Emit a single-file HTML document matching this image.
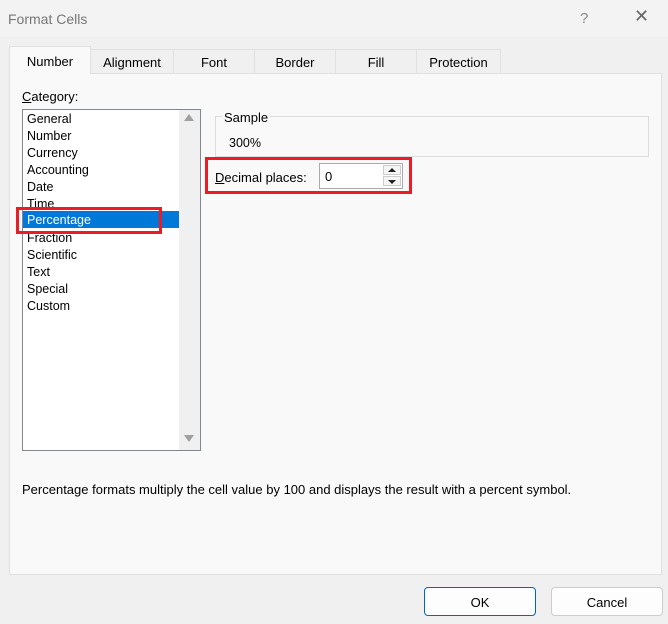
<!DOCTYPE html>
<html><head><style>
*{margin:0;padding:0;box-sizing:border-box}
body{width:668px;height:624px;background:#f0f0f0;font-family:"Liberation Sans",sans-serif;font-size:12.5px;color:#000;position:relative;overflow:hidden}
.a{position:absolute}
.tab{position:absolute;top:49px;height:24px;border:1px solid #e0e0e0;border-bottom:none;background:#f0f0f0;text-align:center;line-height:26px;font-size:13px}
.it{position:absolute;left:27px;font-size:12.5px;line-height:17px}
</style></head><body>
<div class="a" style="left:0;top:0;width:668px;height:37px;background:#f3f3f3"></div>
<div class="a" style="left:8px;top:11px;font-size:14px;color:#777">Format Cells</div>
<div class="a" style="left:580px;top:10px;font-size:15px;color:#888">?</div>
<div class="a" style="left:634px;top:6px;font-size:18px;color:#666">✕</div>

<div class="a" style="left:9px;top:73px;width:653px;height:502px;background:#f9f9f9;border:1px solid #e0e0e0"></div>
<div class="tab" style="left:90px;width:84px">Alignment</div>
<div class="tab" style="left:173px;width:82px">Font</div>
<div class="tab" style="left:254px;width:82px">Border</div>
<div class="tab" style="left:335px;width:82px">Fill</div>
<div class="tab" style="left:416px;width:85px">Protection</div>
<div class="tab" style="left:9px;top:46px;width:82px;height:28px;background:#f9f9f9;line-height:30px">Number</div>

<div class="a" style="left:22px;top:89px;font-size:13px"><u>C</u>ategory:</div>
<div class="a" style="left:22px;top:109px;width:179px;height:342px;border:1px solid #828790;background:#fff"></div>
<div class="a" style="left:179px;top:110px;width:21px;height:340px;background:#f0f0f0"></div>
<div class="a" style="left:184px;top:114px;width:0;height:0;border-left:5px solid transparent;border-right:5px solid transparent;border-bottom:7px solid #a0a0a0"></div>
<div class="a" style="left:184px;top:435px;width:0;height:0;border-left:5px solid transparent;border-right:5px solid transparent;border-top:7px solid #a0a0a0"></div>
<div class="a" style="left:23px;top:211px;width:156px;height:17px;background:#0078d7"></div>
<div class="it" style="top:111px">General</div>
<div class="it" style="top:128px">Number</div>
<div class="it" style="top:145px">Currency</div>
<div class="it" style="top:162px">Accounting</div>
<div class="it" style="top:179px">Date</div>
<div class="it" style="top:196px">Time</div>
<div class="it" style="top:212px;color:#fff">Percentage</div>
<div class="it" style="top:230px">Fraction</div>
<div class="it" style="top:247px">Scientific</div>
<div class="it" style="top:264px">Text</div>
<div class="it" style="top:281px">Special</div>
<div class="it" style="top:298px">Custom</div>
<div class="a" style="left:16px;top:207px;width:146px;height:27px;border:3px solid #ed1c24"></div>

<div class="a" style="left:215px;top:116px;width:434px;height:41px;border:1px solid #dcdcdc"></div>
<div class="a" style="left:222px;top:110px;background:#f9f9f9;padding:0 2px;font-size:13px">Sample</div>
<div class="a" style="left:229px;top:136px">300%</div>

<div class="a" style="left:205px;top:157px;width:207px;height:37px;border:3px solid #ed1c24;background:#f9f9f9"></div>
<div class="a" style="left:215px;top:170px;font-size:13px"><u>D</u>ecimal places:</div>
<div class="a" style="left:319px;top:163px;width:84px;height:26px;border:1px solid #aaa;background:#fff"></div>
<div class="a" style="left:325px;top:169px;font-size:13px">0</div>
<div class="a" style="left:383px;top:165px;width:18px;height:10px;border:1px solid #ccc;background:#f5f5f5"></div>
<div class="a" style="left:383px;top:176px;width:18px;height:10px;border:1px solid #ccc;background:#f5f5f5"></div>
<div class="a" style="left:388px;top:168px;border-left:4px solid transparent;border-right:4px solid transparent;border-bottom:4px solid #222"></div>
<div class="a" style="left:388px;top:180px;border-left:4px solid transparent;border-right:4px solid transparent;border-top:4px solid #222"></div>

<div class="a" style="left:22px;top:482px;font-size:13px">Percentage formats multiply the cell value by 100 and displays the result with a percent symbol.</div>

<div class="a" style="left:424px;top:587px;width:112px;height:29px;border:1px solid #0067c0;border-radius:4px;background:#fdfdfd;text-align:center;line-height:29px;font-size:13px">OK</div>
<div class="a" style="left:551px;top:587px;width:112px;height:29px;border:1px solid #ccc;border-radius:4px;background:#fdfdfd;text-align:center;line-height:29px;font-size:13px">Cancel</div>
</body></html>
